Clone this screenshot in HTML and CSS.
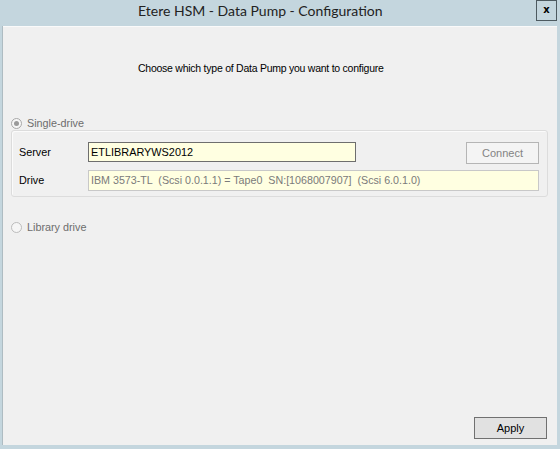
FILE: index.html
```html
<!DOCTYPE html>
<html>
<head>
<meta charset="utf-8">
<link rel="stylesheet" href="styles.css">
</head>
<body>
<div class="window">
  <div class="titlebar">
    <div class="title">Etere HSM - Data Pump - Configuration</div>
    <div class="close">x</div>
  </div>
  <div class="content">
    <div class="heading">Choose which type of Data Pump you want to configure</div>
    <div class="radio-row first">
      <span class="radio checked"></span><span class="radio-label">Single-drive</span>
    </div>
    <div class="group">
      <div class="row">
        <span class="label">Server</span>
        <div class="input server">ETLIBRARYWS2012</div>
        <div class="spacer"></div>
        <div class="btn disabled">Connect</div>
      </div>
      <div class="row row2">
        <span class="label">Drive</span>
        <div class="input drive">IBM 3573-TL  (Scsi 0.0.1.1) = Tape0  SN:[1068007907]  (Scsi 6.0.1.0)</div>
      </div>
    </div>
    <div class="radio-row second">
      <span class="radio"></span><span class="radio-label">Library drive</span>
    </div>
    <div class="footer">
      <div class="btn apply">Apply</div>
    </div>
  </div>
</div>
</body>
</html>
```
FILE: styles.css
```css
html, body {
  margin: 0;
  padding: 0;
}
body {
  width: 560px;
  height: 449px;
  overflow: hidden;
  font-family: "Liberation Sans", Arial, sans-serif;
}
.window {
  width: 560px;
  height: 449px;
  background: #c4d6de;
  display: flex;
  flex-direction: column;
  box-sizing: border-box;
}
.titlebar {
  height: 26px;
  display: flex;
  align-items: flex-start;
  flex: none;
  padding: 0 3px 0 138px;
}
.title {
  font-family: Lato, "Liberation Sans", sans-serif;
  font-size: 14px;
  color: #222;
  line-height: 22px;
  white-space: nowrap;
}
.close {
  margin-left: auto;
  width: 19px;
  height: 19px;
  border: 1px solid #4d5a60;
  font-family: "DejaVu Sans", sans-serif;
  font-weight: bold;
  font-size: 10px;
  line-height: 17px;
  text-align: center;
  color: #000;
}
.content {
  flex: 1;
  margin: 0 3px 4px 3px;
  background: #f0f0f0;
  border-top: 1px solid #fafafa;
  box-shadow: -1px 0 0 #aebcc2;
  display: flex;
  flex-direction: column;
  font-size: 11px;
  color: #000;
}
.heading {
  margin: 35px 0 0 135px;
  line-height: 13px;
  font-size: 10.5px;
  letter-spacing: -0.25px;
  white-space: nowrap;
}
.radio-row {
  display: flex;
  align-items: center;
  height: 12px;
  margin-left: 8px;
  color: #6d6d6d;
}
.radio-row.first {
  margin-top: 42px;
}
.radio-row.second {
  margin-top: 24px;
}
.radio {
  width: 9px;
  height: 9px;
  border: 1px solid #bcbcbc;
  border-radius: 50%;
  background: #f6f6f6;
  position: relative;
  margin-right: 5px;
  flex: none;
}
.radio.checked {
  border-color: #a8a8a8;
}
.radio.checked::after {
  content: "";
  position: absolute;
  left: 2px;
  top: 2px;
  width: 5px;
  height: 5px;
  border-radius: 50%;
  background: #9a9a9a;
}
.radio-label {
  font-size: 10.8px;
  line-height: 12px;
}
.group {
  margin: 1px 0 0 8px;
  width: 537px;
  height: 67px;
  box-sizing: border-box;
  border: 1px solid #dcdcdc;
  border-radius: 3px;
  box-shadow: inset 1px 1px 0 #fbfbfb;
  padding: 11px 8px 0 7px;
}
.row {
  display: flex;
  align-items: flex-start;
}
.row2 {
  margin-top: 6px;
}
.label {
  width: 69px;
  flex: none;
  font-size: 10.8px;
  line-height: 20px;
  color: #000;
}
.input {
  box-sizing: border-box;
  background: #ffffe1;
  white-space: pre;
  padding-left: 2px;
  overflow: hidden;
}
.input.server {
  width: 268px;
  height: 20px;
  border: 1px solid #6e6e6e;
  line-height: 18px;
  color: #000;
  font-size: 10.9px;
}
.input.drive {
  width: 452px;
  height: 21px;
  border: 1px solid #c8c8c8;
  line-height: 19px;
  color: #7a7a7a;
  font-size: 10.7px;
}
.spacer {
  flex: 1;
}
.btn {
  box-sizing: border-box;
  width: 73px;
  height: 22px;
  text-align: center;
  font-size: 11px;
  line-height: 20px;
}
.btn.disabled {
  border: 1px solid #b5b5b5;
  background: #f4f4f4;
  color: #838383;
}
.footer {
  margin-top: auto;
  display: flex;
  justify-content: flex-end;
  padding: 0 10px 6px 0;
}
.btn.apply {
  border: 1px solid #707070;
  background: #e1e1e1;
  color: #000;
}
```
